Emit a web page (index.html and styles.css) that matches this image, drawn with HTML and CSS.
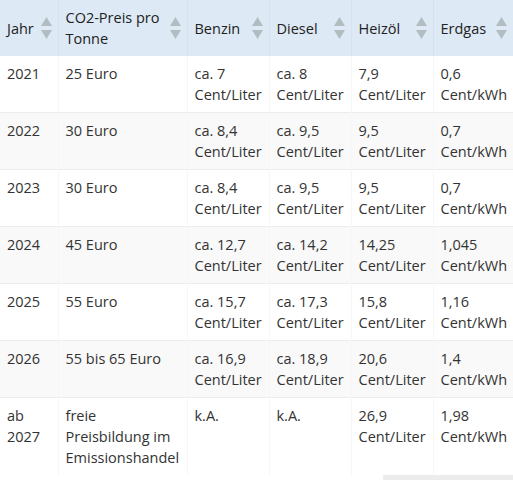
FILE: index.html
```html
<!DOCTYPE html>
<html lang="de">
<head>
<meta charset="utf-8">
<link rel="stylesheet" href="styles.css">
</head>
<body>
<div class="wrap">
<table class="tbl">
  <colgroup>
    <col class="c1"><col class="c2"><col class="c3"><col class="c4"><col class="c5"><col class="c6">
  </colgroup>
  <thead>
    <tr>
      <th><div class="th"><span>Jahr</span><svg class="sort" viewBox="0 0 11 23" width="11" height="23"><polygon points="5.5,0 11,9 0,9"/><polygon points="0,13 11,13 5.5,22"/></svg></div></th>
      <th><div class="th"><span>CO2-Preis pro Tonne</span><svg class="sort" viewBox="0 0 11 23" width="11" height="23"><polygon points="5.5,0 11,9 0,9"/><polygon points="0,13 11,13 5.5,22"/></svg></div></th>
      <th><div class="th"><span>Benzin</span><svg class="sort" viewBox="0 0 11 23" width="11" height="23"><polygon points="5.5,0 11,9 0,9"/><polygon points="0,13 11,13 5.5,22"/></svg></div></th>
      <th><div class="th"><span>Diesel</span><svg class="sort" viewBox="0 0 11 23" width="11" height="23"><polygon points="5.5,0 11,9 0,9"/><polygon points="0,13 11,13 5.5,22"/></svg></div></th>
      <th><div class="th"><span>Heizöl</span><svg class="sort" viewBox="0 0 11 23" width="11" height="23"><polygon points="5.5,0 11,9 0,9"/><polygon points="0,13 11,13 5.5,22"/></svg></div></th>
      <th><div class="th"><span>Erdgas</span><svg class="sort" viewBox="0 0 11 23" width="11" height="23"><polygon points="5.5,0 11,9 0,9"/><polygon points="0,13 11,13 5.5,22"/></svg></div></th>
    </tr>
  </thead>
  <tbody>
    <tr><td>2021</td><td>25 Euro</td><td>ca. 7 Cent/Liter</td><td>ca. 8 Cent/Liter</td><td>7,9 Cent/Liter</td><td>0,6 Cent/kWh</td></tr>
    <tr><td>2022</td><td>30 Euro</td><td>ca. 8,4 Cent/Liter</td><td>ca. 9,5 Cent/Liter</td><td>9,5 Cent/Liter</td><td>0,7 Cent/kWh</td></tr>
    <tr><td>2023</td><td>30 Euro</td><td>ca. 8,4 Cent/Liter</td><td>ca. 9,5 Cent/Liter</td><td>9,5 Cent/Liter</td><td>0,7 Cent/kWh</td></tr>
    <tr><td>2024</td><td>45 Euro</td><td>ca. 12,7 Cent/Liter</td><td>ca. 14,2 Cent/Liter</td><td>14,25 Cent/Liter</td><td>1,045 Cent/kWh</td></tr>
    <tr><td>2025</td><td>55 Euro</td><td>ca. 15,7 Cent/Liter</td><td>ca. 17,3 Cent/Liter</td><td>15,8 Cent/Liter</td><td>1,16 Cent/kWh</td></tr>
    <tr><td>2026</td><td>55 bis 65 Euro</td><td>ca. 16,9 Cent/Liter</td><td>ca. 18,9 Cent/Liter</td><td>20,6 Cent/Liter</td><td>1,4 Cent/kWh</td></tr>
    <tr><td>ab 2027</td><td>freie Preisbildung im Emissionshandel</td><td>k.A.</td><td>k.A.</td><td>26,9 Cent/Liter</td><td>1,98 Cent/kWh</td></tr>
  </tbody>
</table>
<div class="scroll"><div class="thumb"></div></div>
</div>
</body>
</html>
```
FILE: styles.css
```css
html, body {
  margin: 0;
  padding: 0;
  background: #fff;
}
body {
  font-family: "Open Sans", "Liberation Sans", sans-serif;
  font-size: 14.5px;
  line-height: 21px;
  color: #333;
}
.wrap {
  width: 513px;
  overflow: hidden;
}
.tbl {
  table-layout: fixed;
  width: 513px;
  border-collapse: collapse;
  border-spacing: 0;
}
.c1 { width: 58px; }
.c2 { width: 129px; }
.c3 { width: 82px; }
.c4 { width: 82px; }
.c5 { width: 82px; }
.c6 { width: 80px; }
.tbl th {
  background: #dde9f4;
  font-weight: 400;
  text-align: left;
  padding: 7px 6px 7px 7px;
  border-left: 1px solid #d6e3ef;
  color: #222;
  vertical-align: middle;
}
.tbl th:first-child { border-left: none; }
.th {
  display: flex;
  align-items: center;
  justify-content: space-between;
  gap: 6px;
}
.sort {
  flex: 0 0 auto;
  fill: #b2bcc1;
}
.tbl td {
  padding: 7px 6px 7px 7px;
  vertical-align: top;
  border-top: 1px solid #ececec;
  border-left: 1px solid #f6f6f6;
}
.tbl td:first-child { border-left: none; }
.tbl tbody tr:nth-child(even) td { background: #f9f9f9; }
.tbl tbody tr:first-child td { border-top: none; }
.scroll {
  display: flex;
  justify-content: flex-end;
}
.thumb {
  width: 130px;
  height: 5px;
  background: #ececec;
}
```
